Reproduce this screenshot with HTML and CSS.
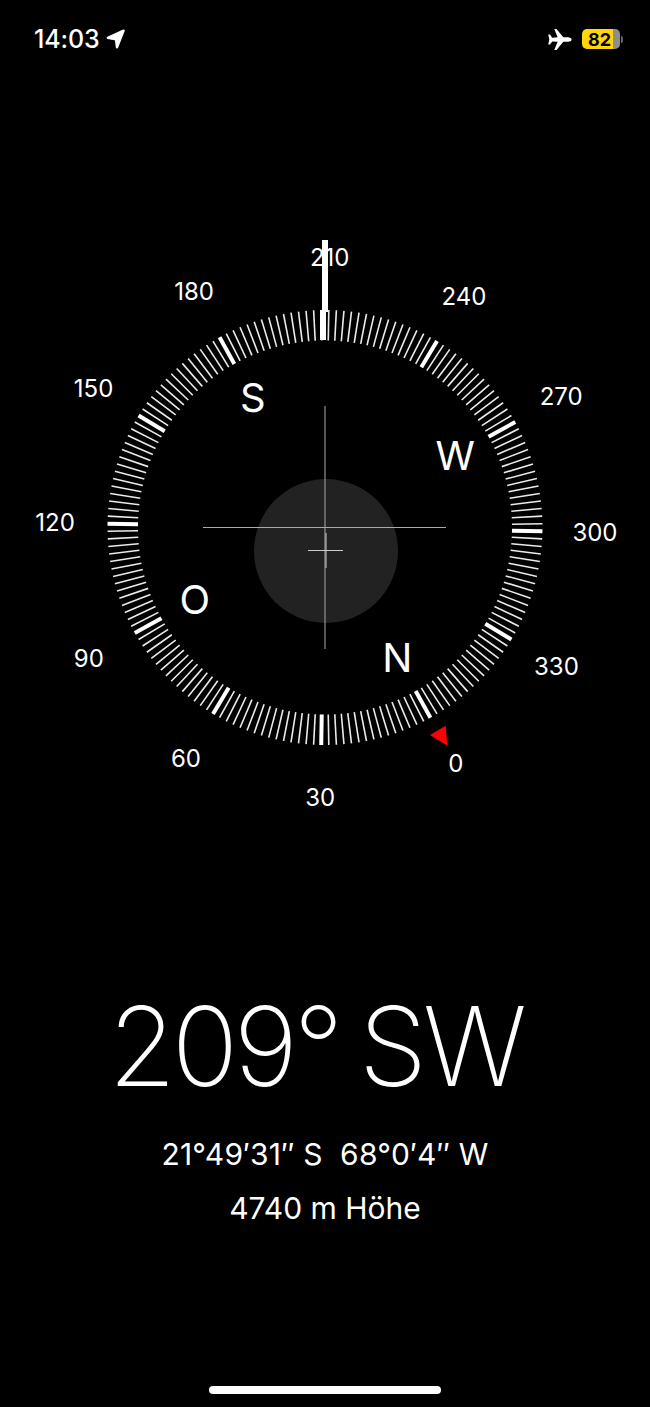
FILE: index.html
```html
<!DOCTYPE html>
<html>
<head>
	<meta charset="utf-8">
	<title>Kompass</title>
	<link rel="stylesheet" href="styles.css">
</head>
<body>
	<div class="status">
		<div class="status-left">
			<span class="clock">14:03</span>
			<svg class="arrow" viewBox="0 0 20 20"><path d="M17.600 1.600 1.800 8.800 10 10.400 11 18.400Z"/></svg>
		</div>
		<div class="status-right">
			<svg class="plane" viewBox="0 0 24 20"><path d="M23.6 10c0-1.3-1.6-2.2-3.3-2.2h-4.600L9.300.2C9.100 0 8.900 0 8.600 0H7l3.200 7.800-5.200.4-1.900-2.700c-.1-.2-.3-.3-.6-.3H1.200l1 4.800-1 4.800h1.300c.3 0 .5-.1.6-.3l1.900-2.700 5.200.4L7 20h1.600c.3 0 .5 0 .7-.2l6.400-7.600h4.600c1.700 0 3.300-.9 3.300-2.200Z"/></svg>
			<div class="battery">
				<div class="battery-body"><span class="battery-level">82</span></div>
				<div class="battery-nub"></div>
			</div>
		</div>
	</div>

	<svg class="dial" id="dial" viewBox="0 220 650 620" width="650" height="620">
		<circle class="bubble" cx="326" cy="551" r="72"/>
		<g id="ticks"></g>
		<g id="labels"></g>
		<line class="cross" x1="203" y1="527.500" x2="446" y2="527.500"/>
		<line class="cross" x1="325" y1="406" x2="325" y2="649"/>
		<line class="cross-small" x1="308" y1="550.500" x2="343" y2="550.500"/>
		<line class="cross-small" x1="326" y1="533" x2="326" y2="568"/>
		<rect class="needle" x="322" y="240" width="6" height="72"/>
		<rect class="needle" x="320" y="310" width="6" height="30"/>
		<polygon class="north" points="430,735 445.700,725.700 447.300,745.700"/>
	</svg>

	<div class="readout">
		<div class="heading">209° SW</div>
		<div class="coords">21°49′31″ S&nbsp;&nbsp;68°0′4″ W</div>
		<div class="altitude">4740 m Höhe</div>
	</div>

	<div class="home-bar"></div>

	<script src="compass.js"></script>
</body>
</html>
```

FILE: styles.css
```css
html, body {
	margin: 0;
	background: #000;
	color: #fff;
	font-family: "Inter", "Liberation Sans", sans-serif;
}

body {
	width: 650px;
	height: 1407px;
	display: flex;
	flex-direction: column;
	overflow: hidden;
}

.status {
	height: 220px;
	box-sizing: border-box;
	padding: 24px 27px 0 34px;
	display: flex;
	justify-content: space-between;
	align-items: flex-start;
}

.status-left, .status-right {
	height: 30px;
	display: flex;
	align-items: center;
}

.clock {
	font-size: 25px;
	font-weight: 500;
	letter-spacing: -0.1px;
}

.arrow {
	width: 20px;
	height: 20px;
	margin-left: 6px;
	fill: #fff;
	stroke: #fff;
	stroke-width: 2.4;
	stroke-linejoin: round;
}

.plane {
	width: 25px;
	height: 21px;
	fill: #fff;
}

.battery {
	margin-left: 10px;
	display: flex;
	align-items: center;
}

.battery-body {
	width: 38px;
	height: 20px;
	border-radius: 5px;
	background: linear-gradient(to right, #ffd60a 0 31px, #8e8e8e 31px);
	display: flex;
	align-items: center;
	padding-left: 6px;
	box-sizing: border-box;
}

.battery-level {
	font-size: 18px;
	font-weight: 700;
	color: #000;
}

.battery-nub {
	width: 2px;
	height: 7px;
	margin-left: 1px;
	border-radius: 0 2px 2px 0;
	background: #666;
}

.dial {
	display: block;
	flex: none;
}

.tick {
	stroke: #fff;
	stroke-width: 1.6;
	opacity: 0.92;
}

.tick-major {
	stroke-width: 4;
	opacity: 1;
}

.degree {
	fill: #fff;
	font-size: 24px;
	text-anchor: middle;
	dominant-baseline: central;
}

.cardinal {
	fill: #fff;
	font-size: 40px;
	text-anchor: middle;
	dominant-baseline: central;
}

.bubble { fill: #222; }
.cross { stroke: #aaa; stroke-width: 1; }
.cross-small { stroke: #ccc; stroke-width: 1; }
.needle { fill: #fff; }
.north { fill: #f00; }

.readout {
	margin-top: 146px;
	text-align: center;
}

.heading {
	font-size: 110px;
	font-weight: 200;
	line-height: 120px;
	letter-spacing: -4.4px;
	word-spacing: -7px;
	padding-right: 19px;
}

.coords, .altitude {
	font-size: 30px;
	line-height: 54px;
}

.coords {
	margin-top: 21px;
	letter-spacing: 0.2px;
}

.home-bar {
	width: 232px;
	height: 8px;
	margin: auto auto 13px;
	border-radius: 4px;
	background: #fff;
}
```

FILE: compass.js
```js
const SVG_NS = "http://www.w3.org/2000/svg";
const CX = 325;
const CY = 527.5;
const HEADING = 209;

function polar(deg, r) {
	const a = (deg - HEADING) * Math.PI / 180;
	return [CX + r * Math.sin(a), CY - r * Math.cos(a)];
}

function add(parent, name, attrs, text) {
	const el = document.createElementNS(SVG_NS, name);
	for (const k in attrs) el.setAttribute(k, attrs[k]);
	if (text) el.textContent = text;
	parent.appendChild(el);
}

const ticks = document.getElementById("ticks");
for (let deg = 0; deg < 360; deg += 2) {
	const [x1, y1] = polar(deg, 187);
	const [x2, y2] = polar(deg, 217.5);
	// the tick beside the needle stays thin
	const major = deg % 30 == 0 && deg != 210;
	add(ticks, "line", {x1, y1, x2, y2, class: major ? "tick tick-major" : "tick"});
}

const labels = document.getElementById("labels");
for (let deg = 0; deg < 360; deg += 30) {
	const [x, y] = polar(deg, 270);
	add(labels, "text", {x, y, class: "degree"}, String(deg));
}

const cardinals = {N: 0, O: 90, S: 180, W: 270};
for (const name in cardinals) {
	const [x, y] = polar(cardinals[name], 149);
	add(labels, "text", {x, y, class: "cardinal"}, name);
}
```
